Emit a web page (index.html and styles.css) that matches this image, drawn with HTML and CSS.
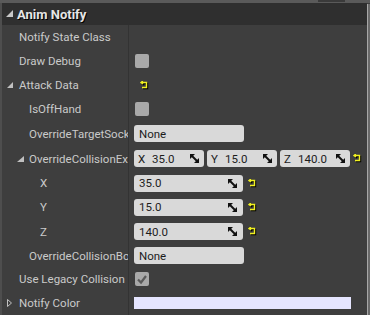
FILE: index.html
```html
<!DOCTYPE html>
<html>
<head>
<meta charset="utf-8">
<link rel="stylesheet" href="styles.css">
</head>
<body>
<div class="panel">
  <div class="topbar"><div class="tab"></div></div>
  <div class="main">
    <div class="content">
      <div class="header">
        <svg class="tri" width="7" height="7" viewBox="0 0 7 7"><polygon points="7,0 7,7 0,7" fill="#c8c8c8"/></svg>
        <span>Anim Notify</span>
      </div>

      <div class="row">
        <div class="label i1">Notify State Class</div>
        <div class="value"></div>
      </div>

      <div class="row">
        <div class="label i1">Draw Debug</div>
        <div class="value"><div class="check"></div></div>
      </div>

      <div class="row">
        <div class="label i1t"><svg class="tri t1" width="6" height="6" viewBox="0 0 6 6"><polygon points="6,0 6,6 0,6" fill="#c0c0c0"/></svg>Attack Data</div>
        <div class="value"><svg class="reset r0" width="9" height="9" viewBox="0 0 9 9"><g transform="translate(1,1)" fill="none" stroke="#000" stroke-width="1.4"><path d="M1.5 1.5 H6.5 V6.5 H2"/><path d="M3 0 L1 1.5 L3 3"/></g><g fill="none" stroke="#f0f020" stroke-width="1.4"><path d="M1.5 1.5 H6.5 V6.5 H2"/><path d="M3 0 L1 1.5 L3 3"/></g></svg></div>
      </div>

      <div class="row">
        <div class="label i2">IsOffHand</div>
        <div class="value"><div class="check"></div></div>
      </div>

      <div class="row tall">
        <div class="label i2">OverrideTargetSock</div>
        <div class="value"><div class="box text">None</div></div>
      </div>

      <div class="row tall">
        <div class="label i2t"><svg class="tri t2" width="7" height="6" viewBox="0 0 7 6"><polygon points="7,0 7,6 0,6" fill="#c0c0c0"/></svg>OverrideCollisionEx</div>
        <div class="value vec">
          <div class="box comp"><span class="axis">X</span><span class="num">35.0</span><svg class="spin" width="9" height="9" viewBox="0 0 9 9"><polygon points="0,0 5,0 0,5" fill="#111"/><polygon points="9,9 4,9 9,4" fill="#111"/><line x1="1" y1="1" x2="8" y2="8" stroke="#111" stroke-width="2"/></svg></div>
          <div class="box comp"><span class="axis">Y</span><span class="num">15.0</span><svg class="spin" width="9" height="9" viewBox="0 0 9 9"><polygon points="0,0 5,0 0,5" fill="#111"/><polygon points="9,9 4,9 9,4" fill="#111"/><line x1="1" y1="1" x2="8" y2="8" stroke="#111" stroke-width="2"/></svg></div>
          <div class="box comp"><span class="axis">Z</span><span class="num">140.0</span><svg class="spin" width="9" height="9" viewBox="0 0 9 9"><polygon points="0,0 5,0 0,5" fill="#111"/><polygon points="9,9 4,9 9,4" fill="#111"/><line x1="1" y1="1" x2="8" y2="8" stroke="#111" stroke-width="2"/></svg></div>
          <svg class="reset" width="9" height="9" viewBox="0 0 9 9"><g transform="translate(1,1)" fill="none" stroke="#000" stroke-width="1.4"><path d="M1.5 1.5 H6.5 V6.5 H2"/><path d="M3 0 L1 1.5 L3 3"/></g><g fill="none" stroke="#f0f020" stroke-width="1.4"><path d="M1.5 1.5 H6.5 V6.5 H2"/><path d="M3 0 L1 1.5 L3 3"/></g></svg>
        </div>
      </div>

      <div class="row">
        <div class="label i3">X</div>
        <div class="value"><div class="box numbox"><span class="num">35.0</span><svg class="spin" width="9" height="9" viewBox="0 0 9 9"><polygon points="0,0 5,0 0,5" fill="#111"/><polygon points="9,9 4,9 9,4" fill="#111"/><line x1="1" y1="1" x2="8" y2="8" stroke="#111" stroke-width="2"/></svg></div><svg class="reset r1" width="9" height="9" viewBox="0 0 9 9"><g transform="translate(1,1)" fill="none" stroke="#000" stroke-width="1.4"><path d="M1.5 1.5 H6.5 V6.5 H2"/><path d="M3 0 L1 1.5 L3 3"/></g><g fill="none" stroke="#f0f020" stroke-width="1.4"><path d="M1.5 1.5 H6.5 V6.5 H2"/><path d="M3 0 L1 1.5 L3 3"/></g></svg></div>
      </div>

      <div class="row">
        <div class="label i3">Y</div>
        <div class="value"><div class="box numbox"><span class="num">15.0</span><svg class="spin" width="9" height="9" viewBox="0 0 9 9"><polygon points="0,0 5,0 0,5" fill="#111"/><polygon points="9,9 4,9 9,4" fill="#111"/><line x1="1" y1="1" x2="8" y2="8" stroke="#111" stroke-width="2"/></svg></div><svg class="reset r1" width="9" height="9" viewBox="0 0 9 9"><g transform="translate(1,1)" fill="none" stroke="#000" stroke-width="1.4"><path d="M1.5 1.5 H6.5 V6.5 H2"/><path d="M3 0 L1 1.5 L3 3"/></g><g fill="none" stroke="#f0f020" stroke-width="1.4"><path d="M1.5 1.5 H6.5 V6.5 H2"/><path d="M3 0 L1 1.5 L3 3"/></g></svg></div>
      </div>

      <div class="row tall">
        <div class="label i3">Z</div>
        <div class="value"><div class="box numbox"><span class="num">140.0</span><svg class="spin" width="9" height="9" viewBox="0 0 9 9"><polygon points="0,0 5,0 0,5" fill="#111"/><polygon points="9,9 4,9 9,4" fill="#111"/><line x1="1" y1="1" x2="8" y2="8" stroke="#111" stroke-width="2"/></svg></div><svg class="reset r1" width="9" height="9" viewBox="0 0 9 9"><g transform="translate(1,1)" fill="none" stroke="#000" stroke-width="1.4"><path d="M1.5 1.5 H6.5 V6.5 H2"/><path d="M3 0 L1 1.5 L3 3"/></g><g fill="none" stroke="#f0f020" stroke-width="1.4"><path d="M1.5 1.5 H6.5 V6.5 H2"/><path d="M3 0 L1 1.5 L3 3"/></g></svg></div>
      </div>

      <div class="row short">
        <div class="label i2">OverrideCollisionBo</div>
        <div class="value"><div class="box text">None</div></div>
      </div>

      <div class="row">
        <div class="label i1">Use Legacy Collision</div>
        <div class="value"><div class="check"><svg width="14" height="14" viewBox="0 0 14 14"><path d="M3 7.5 L6 10.5 L11 4" fill="none" stroke="#5a5a5a" stroke-width="2.2"/></svg></div></div>
      </div>

      <div class="row">
        <div class="label i1c"><svg class="tri t3" width="5" height="8" viewBox="0 0 5 8"><polygon points="0.5,0.5 4.5,4 0.5,7.5" fill="none" stroke="#c0c0c0" stroke-width="1"/></svg>Notify Color</div>
        <div class="value"><div class="color"></div></div>
      </div>
    </div>
    <div class="scroll"></div>
  </div>
</div>
</body>
</html>
```

FILE: styles.css
```css
* { box-sizing: border-box; }
html, body {
  margin: 0;
  padding: 0;
  width: 370px;
  height: 315px;
  overflow: hidden;
  background: #3e3e3e;
  font-family: Roboto, "Noto Sans", sans-serif;
  font-size: 11.5px;
}
.panel {
  width: 370px;
  height: 315px;
  display: flex;
  flex-direction: column;
}
.topbar {
  height: 3px;
  background: #5a5a5a;
  flex: none;
  padding-left: 318px;
}
.tab {
  width: 27px;
  height: 2px;
  background: #3a3a3a;
}
.main {
  flex: 1;
  display: flex;
  border-left: 2px solid #4e4e4e;
  min-height: 0;
}
.content {
  flex: 1;
  background: #3e3e3e;
  display: flex;
  flex-direction: column;
}
.scroll {
  width: 3px;
  background: #6a6a6a;
  border-left: 1px solid #a8a8a8;
  margin-top: 1px;
}
.header {
  height: 22px;
  flex: none;
  background: #2f2f2f;
  display: flex;
  align-items: center;
  padding-left: 4px;
  color: #e6e6e6;
  font-weight: bold;
  font-size: 13px;
  text-shadow: 1px 1px 0 #000;
}
.header .tri {
  margin-right: 4px;
  margin-top: -1px;
}
.row {
  height: 24px;
  flex: none;
  display: flex;
  align-items: stretch;
}
.row.tall { height: 25px; }
.row.short { height: 23px; }
.label {
  width: 127px;
  flex: none;
  border-right: 1px solid #333;
  color: #cacaca;
  white-space: nowrap;
  overflow: hidden;
  display: flex;
  align-items: center;
}
.i1 { padding-left: 17px; }
.i1t { padding-left: 5px; }
.i1c { padding-left: 5px; }
.i2 { padding-left: 27px; }
.i2t { padding-left: 15px; }
.i3 { padding-left: 38px; }
.tri { flex: none; }
.t1 { margin-right: 6px; }
.t2 { margin-right: 5px; }
.t3 { margin-right: 7px; }
.value {
  flex: 1;
  display: flex;
  align-items: center;
  padding-left: 5px;
}
.check {
  width: 14px;
  height: 14px;
  margin-left: 1px;
  background: #a9a9a9;
  border-radius: 2px;
}
.check svg { display: block; }
.box {
  height: 17px;
  background: #d9d9d9;
  border-radius: 3px;
  color: #1c1c1c;
  display: flex;
  align-items: center;
}
.text {
  width: 110px;
  padding-left: 5px;
}
.vec { gap: 3px; }
.comp {
  width: 70px;
  padding: 0 5px 0 4px;
}
.axis { width: 14px; }
.num { flex: 1; }
.spin { flex: none; display: block; }
.numbox {
  width: 109px;
  padding: 0 6px 0 5px;
}
.reset { display: block; flex: none; }
.r0 { margin-left: 6px; }
.r1 { margin-left: 5px; }
.color {
  width: 217px;
  height: 12px;
  background: #e5e5ff;
}
```
